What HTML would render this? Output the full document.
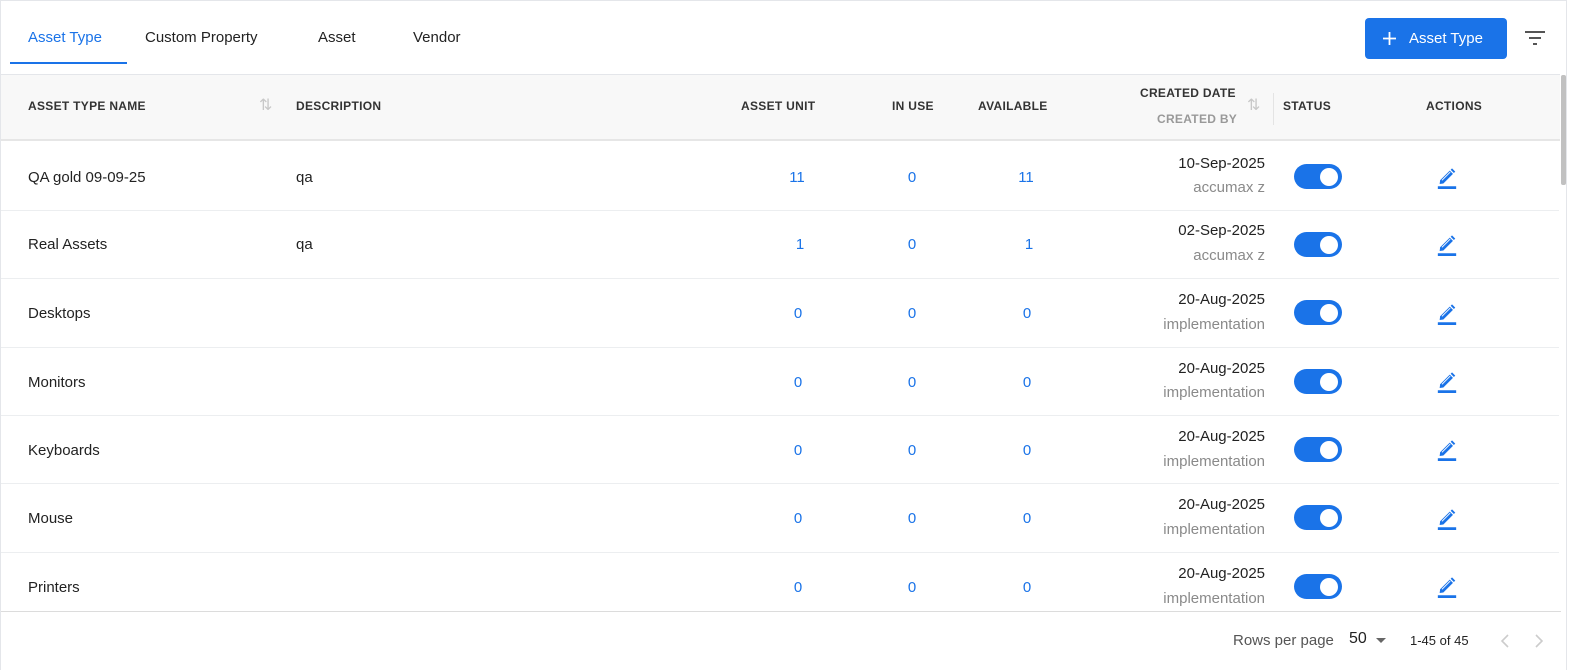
<!DOCTYPE html>
<html><head><meta charset="utf-8"><style>
*{margin:0;padding:0;box-sizing:border-box}
body{width:1570px;height:670px;background:#fff;font-family:"Liberation Sans",sans-serif;color:#212529;position:relative;overflow:hidden}
.a{position:absolute;white-space:nowrap}
.frame{position:absolute;left:0;top:0;width:1567px;height:670px;border:1px solid #e4e6ea;border-bottom:none}
.tab{top:29px;font-size:15px;color:#222}
.hd{font-size:12px;font-weight:bold;color:#333;letter-spacing:0.3px}
.cell{font-size:15px;color:#222;margin-top:2px}
.num{font-size:15px;color:#1a73e8;text-align:center;width:60px;margin-top:2px}
.date{font-size:15px;color:#222;text-align:right;width:160px;left:1105px;margin-top:1px}
.by{font-size:15px;color:#8a8a8a;text-align:right;width:160px;left:1105px;margin-top:1px}
.sep{position:absolute;left:1px;width:1558px;height:1px;background:#eceef0}
.tg{position:absolute;left:1294px;width:48px;height:25px;border-radius:13px;background:#1a73e8}
.tg::after{content:"";position:absolute;right:4px;top:3.5px;width:18px;height:18px;border-radius:50%;background:#fff}
.ed{position:absolute;left:1436px;width:22px;height:24px}
.sa{position:absolute;color:#c8c8c8;font-size:16px}
</style></head><body>
<div class="frame"></div>
<div class="a tab" style="left:28px;color:#1a73e8">Asset Type</div>
<div class="a tab" style="left:145px">Custom Property</div>
<div class="a tab" style="left:318px">Asset</div>
<div class="a tab" style="left:413px">Vendor</div>
<div class="a" style="left:10px;top:62px;width:117px;height:2px;background:#1a73e8"></div>
<div class="a" style="left:1365px;top:18px;width:142px;height:41px;background:#1a73e8;border-radius:4px;color:#fff;font-size:15px;line-height:41px">
<svg style="position:absolute;left:17px;top:13px" width="15" height="15" viewBox="0 0 15 15"><path d="M7.5 1v13M1 7.5h13" stroke="#fff" stroke-width="1.8"/></svg>
<span style="position:absolute;left:44px">Asset Type</span></div>
<svg class="a" style="left:1524px;top:30px" width="22" height="16" viewBox="0 0 22 16"><path d="M1 2h20M5 8h12M9 14h4" stroke="#555" stroke-width="2"/></svg>

<div class="a" style="left:1px;top:74px;width:1559px;height:67px;background:#f8f8f8;border-top:1px solid #e4e6ea;border-bottom:2px solid #e6e6e6"></div>
<div class="a" style="left:1561px;top:75px;width:5px;height:110px;background:#c1c1c1;border-radius:2px"></div>
<div class="a hd" style="left:28px;top:99px">ASSET TYPE NAME</div>
<div class="a sa" style="left:259px;top:95px">⇅</div>
<div class="a hd" style="left:296px;top:99px">DESCRIPTION</div>
<div class="a hd" style="left:741px;top:99px">ASSET UNIT</div>
<div class="a hd" style="left:892px;top:99px">IN USE</div>
<div class="a hd" style="left:978px;top:99px">AVAILABLE</div>
<div class="a hd" style="left:1140px;top:86px">CREATED DATE</div>
<div class="a hd" style="left:1157px;top:112px;color:#999">CREATED BY</div>
<div class="a sa" style="left:1247px;top:95px">⇅</div>
<div class="a" style="left:1273px;top:93px;width:1px;height:32px;background:#e4e4e4"></div>
<div class="a hd" style="left:1283px;top:99px">STATUS</div>
<div class="a hd" style="left:1426px;top:99px">ACTIONS</div>

<!-- rows -->
<div class="a cell" style="left:28px;top:167px">QA gold 09-09-25</div>
<div class="a cell" style="left:296px;top:167px">qa</div>
<div class="a num" style="left:767px;top:167px">11</div>
<div class="a num" style="left:882px;top:167px">0</div>
<div class="a num" style="left:996px;top:167px">11</div>
<div class="a date" style="top:154px">10-Sep-2025</div>
<div class="a by" style="top:178px">accumax z</div>
<div class="tg" style="top:164px"></div>
<div class="sep" style="top:210px"></div>

<div class="a cell" style="left:28px;top:234px">Real Assets</div>
<div class="a cell" style="left:296px;top:234px">qa</div>
<div class="a num" style="left:770px;top:234px">1</div>
<div class="a num" style="left:882px;top:234px">0</div>
<div class="a num" style="left:999px;top:234px">1</div>
<div class="a date" style="top:221px">02-Sep-2025</div>
<div class="a by" style="top:246px">accumax z</div>
<div class="tg" style="top:232px"></div>
<div class="sep" style="top:278px"></div>

<div class="a cell" style="left:28px;top:303px">Desktops</div>
<div class="a num" style="left:768px;top:303px">0</div>
<div class="a num" style="left:882px;top:303px">0</div>
<div class="a num" style="left:997px;top:303px">0</div>
<div class="a date" style="top:290px">20-Aug-2025</div>
<div class="a by" style="top:315px">implementation</div>
<div class="tg" style="top:300px"></div>
<div class="sep" style="top:347px"></div>

<div class="a cell" style="left:28px;top:372px">Monitors</div>
<div class="a num" style="left:768px;top:372px">0</div>
<div class="a num" style="left:882px;top:372px">0</div>
<div class="a num" style="left:997px;top:372px">0</div>
<div class="a date" style="top:359px">20-Aug-2025</div>
<div class="a by" style="top:383px">implementation</div>
<div class="tg" style="top:369px"></div>
<div class="sep" style="top:415px"></div>

<div class="a cell" style="left:28px;top:440px">Keyboards</div>
<div class="a num" style="left:768px;top:440px">0</div>
<div class="a num" style="left:882px;top:440px">0</div>
<div class="a num" style="left:997px;top:440px">0</div>
<div class="a date" style="top:427px">20-Aug-2025</div>
<div class="a by" style="top:452px">implementation</div>
<div class="tg" style="top:437px"></div>
<div class="sep" style="top:483px"></div>

<div class="a cell" style="left:28px;top:508px">Mouse</div>
<div class="a num" style="left:768px;top:508px">0</div>
<div class="a num" style="left:882px;top:508px">0</div>
<div class="a num" style="left:997px;top:508px">0</div>
<div class="a date" style="top:495px">20-Aug-2025</div>
<div class="a by" style="top:520px">implementation</div>
<div class="tg" style="top:505px"></div>
<div class="sep" style="top:552px"></div>

<div class="a cell" style="left:28px;top:577px">Printers</div>
<div class="a num" style="left:768px;top:577px">0</div>
<div class="a num" style="left:882px;top:577px">0</div>
<div class="a num" style="left:997px;top:577px">0</div>
<div class="a date" style="top:564px">20-Aug-2025</div>
<div class="a by" style="top:589px">implementation</div>
<div class="tg" style="top:574px"></div>

<!-- edit icons -->
<svg width="0" height="0" style="position:absolute"><defs><g id="pen"><path d="M4 18.5 L4.5 14.5 L15 4 L18.5 7.5 L8 18 Z" fill="#1a73e8"/><path d="M16 3 L17.5 1.5 L21 5 L19.5 6.5 Z" fill="#1a73e8"/><path d="M6.5 14.5 L15.5 5.5" stroke="#fff" stroke-width="1"/><rect x="2" y="21" width="20" height="3" fill="#1a73e8"/></g></defs></svg>
<svg class="ed" style="top:166px" viewBox="0 0 24 24"><use href="#pen"/></svg>
<svg class="ed" style="top:233px" viewBox="0 0 24 24"><use href="#pen"/></svg>
<svg class="ed" style="top:302px" viewBox="0 0 24 24"><use href="#pen"/></svg>
<svg class="ed" style="top:370px" viewBox="0 0 24 24"><use href="#pen"/></svg>
<svg class="ed" style="top:438px" viewBox="0 0 24 24"><use href="#pen"/></svg>
<svg class="ed" style="top:507px" viewBox="0 0 24 24"><use href="#pen"/></svg>
<svg class="ed" style="top:575px" viewBox="0 0 24 24"><use href="#pen"/></svg>

<!-- footer -->
<div class="a" style="left:1px;top:611px;width:1560px;height:59px;background:#fff;border-top:1px solid #dcdcdc"></div>
<div class="a" style="left:1233px;top:632px;font-size:15px;color:#555">Rows per page</div>
<div class="a" style="left:1349px;top:630px;font-size:16px;color:#222">50</div>
<div class="a" style="left:1376px;top:638px;width:0;height:0;border-left:5px solid transparent;border-right:5px solid transparent;border-top:5px solid #666"></div>
<div class="a" style="left:1410px;top:633px;font-size:13px;color:#222">1-45 of 45</div>
<svg class="a" style="left:1500px;top:634px" width="10" height="14" viewBox="0 0 10 14"><path d="M8 1L2 7l6 6" fill="none" stroke="#ccc" stroke-width="1.6"/></svg>
<svg class="a" style="left:1534px;top:634px" width="10" height="14" viewBox="0 0 10 14"><path d="M2 1l6 6-6 6" fill="none" stroke="#ccc" stroke-width="1.6"/></svg>
</body></html>
